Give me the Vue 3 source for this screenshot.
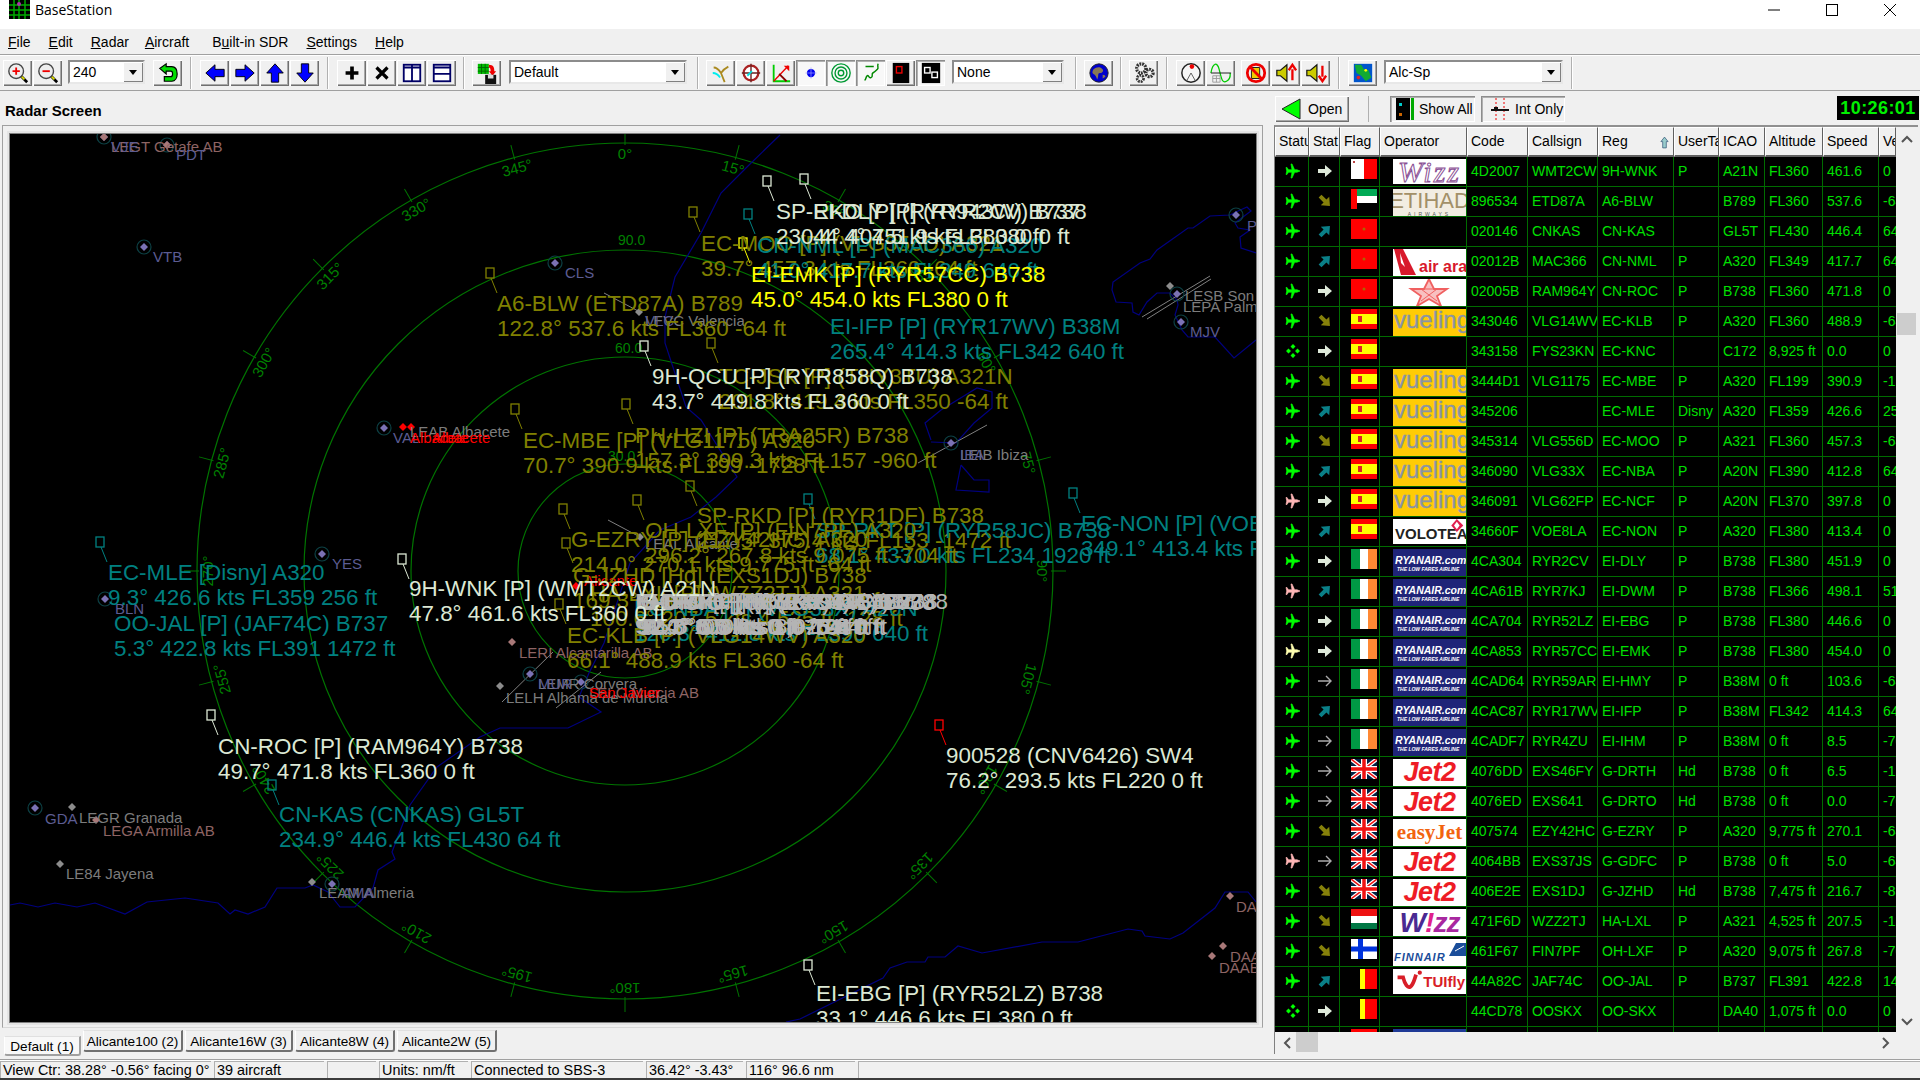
<template>
  <div class="window">
    <div class="titlebar">
      <svg class="app-icon" viewBox="0 0 21 19">
        <rect width="21" height="19" fill="#000" />
        <path d="M0 5h21M0 10h21M0 15h21M5 0v19M10 0v19M16 0v19" stroke="#0a0" stroke-width="1.5" />
        <circle cx="10" cy="4" r="2" fill="#a3a" />
      </svg>
      <span class="title">BaseStation</span>
      <div class="win-btns">
        <svg viewBox="0 0 12 12"><path d="M0 6h12" stroke="#000" /></svg>
        <svg viewBox="0 0 12 12"><rect x=".5" y=".5" width="11" height="11" fill="none" stroke="#000" /></svg>
        <svg viewBox="0 0 12 12"><path d="M0 0l12 12M12 0L0 12" stroke="#000" /></svg>
      </div>
    </div>

    <div class="menubar">
      <span><u>F</u>ile</span>
      <span><u>E</u>dit</span>
      <span><u>R</u>adar</span>
      <span class="m-a"><u>A</u>ircraft</span>
      <span class="m-b">B<u>u</u>ilt-in SDR</span>
      <span><u>S</u>ettings</span>
      <span><u>H</u>elp</span>
    </div>

    <div class="toolbar">
      <button class="tb">
        <svg viewBox="0 0 24 24"><path d="M15 15l7 7" stroke="#000" stroke-width="3" /><path d="M16 16l3 3" stroke="#dd0" stroke-width="2" /><circle cx="10" cy="10" r="8" fill="#eee" stroke="#444" stroke-width="1.5" /><path d="M6 10h8M10 6v8" stroke="#e00" stroke-width="2" /></svg>
      </button>
      <button class="tb">
        <svg viewBox="0 0 24 24"><path d="M15 15l7 7" stroke="#000" stroke-width="3" /><path d="M16 16l3 3" stroke="#dd0" stroke-width="2" /><circle cx="10" cy="10" r="8" fill="#eee" stroke="#444" stroke-width="1.5" /><path d="M6 10h8" stroke="#e00" stroke-width="2" /></svg>
      </button>
      <div class="combo" style="width: 77px; margin-left: 5px;"><span>240</span><i class="drop"></i></div>
      <button class="tb" style="margin-left: 7px;">
        <svg viewBox="0 0 24 24"><path d="M3 7l7-5v3h6c5 0 6 4 6 8s-2 8-6 8H8v-5h7c2 0 2-1 2-3s0-3-2-3h-5v3z" fill="#0d0" stroke="#000" stroke-width="1.3" /></svg>
      </button>
      <div class="sep"></div>
      <button class="tb"><svg viewBox="0 0 24 24"><path d="M2 12l10-9v5h10v8H12v5z" fill="#00f" stroke="#000" /></svg></button>
      <button class="tb"><svg viewBox="0 0 24 24"><path d="M22 12l-10-9v5H2v8h10v5z" fill="#00f" stroke="#000" /></svg></button>
      <button class="tb"><svg viewBox="0 0 24 24"><path d="M12 2l9 10h-5v10H8V12H3z" fill="#00f" stroke="#000" /></svg></button>
      <button class="tb"><svg viewBox="0 0 24 24"><path d="M12 22l9-10h-5V2H8v10H3z" fill="#00f" stroke="#000" /></svg></button>
      <div class="sep"></div>
      <button class="tb"><svg viewBox="0 0 24 24"><path d="M12 5v14M5 12h14" stroke="#000" stroke-width="4" /></svg></button>
      <button class="tb"><svg viewBox="0 0 24 24"><path d="M6 6l12 12M18 6L6 18" stroke="#000" stroke-width="3.5" /></svg></button>
      <button class="tb"><svg viewBox="0 0 24 24"><rect x="3" y="3" width="18" height="18" fill="#fff" stroke="#006" stroke-width="2" /><path d="M3 6h18M12 3v18" stroke="#006" stroke-width="2" /></svg></button>
      <button class="tb"><svg viewBox="0 0 24 24"><rect x="3" y="3" width="18" height="18" fill="#fff" stroke="#006" stroke-width="2" /><path d="M3 6h18M3 13h18" stroke="#006" stroke-width="2" /></svg></button>
      <div class="sep narrow"></div>
      <button class="tb">
        <svg viewBox="0 0 24 24"><rect x="2" y="2" width="12" height="11" fill="#0b0" /><path d="M2 6h12M2 10h12M6 2v11M10 2v11" stroke="#060" /><path d="M14 3c5 0 6 3 6 7h2l-4 5-4-5h2c0-3-1-4-2-4z" fill="#e00" /><rect x="10" y="14" width="12" height="10" fill="#111" /><rect x="13" y="14" width="6" height="4" fill="#ddd" /></svg>
      </button>
      <div class="combo" style="width: 178px; margin-left: 7px; margin-right: 3px;"><span>Default</span><i class="drop"></i></div>
      <div class="sep narrow"></div>
      <button class="tb"><svg viewBox="0 0 24 24"><path d="M4 6c4 0 6 3 8 6 2-3 4-5 8-7M12 12l4 10" fill="none" stroke="#aa8a20" stroke-width="2" /><path d="M3 12c3 0 6 2 8 5" fill="none" stroke="#0ee" stroke-width="2" /></svg></button>
      <button class="tb"><svg viewBox="0 0 24 24"><circle cx="12" cy="12" r="8" fill="#fff" stroke="#a22" stroke-width="2.5" /><path d="M12 2v20M2 12h20" stroke="#6a2020" stroke-width="1.5" /><path d="M8 15l5-5" stroke="#0dd" stroke-width="2" /></svg></button>
      <button class="tb"><svg viewBox="0 0 24 24"><path d="M4 3v18h18" fill="none" stroke="#0c0" stroke-width="2" /><path d="M4 21L20 4" stroke="#e00" stroke-width="1.5" /><path d="M15 4h6v6z" fill="#e00" /><path d="M10 13l8 8" stroke="#800" stroke-width="2" /></svg></button>
      <button class="tb down"><svg viewBox="0 0 24 24"><circle cx="12" cy="12" r="4.5" fill="#00e" /><path d="M12 6v12M6 12h12" stroke="#99f" stroke-width=".8" /></svg></button>
      <button class="tb down"><svg viewBox="0 0 24 24"><circle cx="12" cy="12" r="10" fill="none" stroke="#093" stroke-width="1.5" /><circle cx="12" cy="12" r="6.5" fill="none" stroke="#093" stroke-width="1.5" /><circle cx="12" cy="12" r="3" fill="none" stroke="#093" stroke-width="1.5" /></svg></button>
      <button class="tb down"><svg viewBox="0 0 24 24"><path d="M6 5h9M20 2c-2 2 1 4-1 6s-3 3-5 4 1 4-2 5-2-3-4-2-1 4-3 5" fill="none" stroke="#080" stroke-width="1.6" /></svg></button>
      <button class="tb"><svg viewBox="0 0 24 24"><rect x="3" y="1" width="18" height="22" fill="#000" /><rect x="7" y="5" width="6" height="7" fill="none" stroke="#e00" stroke-width="1.5" /></svg></button>
      <button class="tb down"><svg viewBox="0 0 24 24"><rect x="2" y="1" width="20" height="22" fill="#000" /><rect x="5" y="6" width="6" height="6" fill="none" stroke="#fff" stroke-width="1.5" /><rect x="13" y="11" width="6" height="6" fill="none" stroke="#fff" stroke-width="1.5" /></svg></button>
      <div class="combo" style="width: 112px; margin-left: 6px; margin-right: 4px;"><span>None</span><i class="drop"></i></div>
      <div class="sep narrow"></div>
      <button class="tb"><svg viewBox="0 0 24 24"><circle cx="12" cy="12" r="10" fill="#00c" stroke="#222" /><path d="M6 8c3-3 7-3 9-1 3 2 1 5-2 5s-1 4-3 7c-1-3-2-5-4-6s-1-3 0-5zM16 14c2 0 3 1 3 2l-3 2z" fill="#875" /></svg></button>
      <div class="sep narrow"></div>
      <button class="tb"><svg viewBox="0 0 24 24"><circle cx="9" cy="7" r="5" fill="none" stroke="#333" stroke-width="3.5" stroke-dasharray="2 1" /><circle cx="18" cy="12" r="4" fill="none" stroke="#333" stroke-width="3.5" stroke-dasharray="2 1" /><circle cx="8" cy="18" r="3.5" fill="none" stroke="#333" stroke-width="3" stroke-dasharray="2 1" /></svg></button>
      <div class="sep"></div>
      <button class="tb"><svg viewBox="0 0 24 24"><circle cx="12" cy="12" r="10" fill="#f6f6f6" stroke="#222" stroke-width="1.6" /><path d="M12 12L7 21M12 12l5 9" stroke="#555" /><circle cx="13" cy="5" r="2.5" fill="#e00" /></svg></button>
      <button class="tb"><svg viewBox="0 0 24 24"><path d="M1 12C3 0 8 0 10 8s3 16 8 13 4-6 4-9" fill="none" stroke="#0c0" stroke-width="1.4" /><path d="M1 12h22" stroke="#111" /><path d="M3 15h8v7H3zM3 18h8M7 15v7" fill="none" stroke="#999" /></svg></button>
      <button class="tb" style="margin-left: 5px;"><svg viewBox="0 0 24 24"><path d="M7 6l9 0v12H7z" fill="#ec0" stroke="#111" /><circle cx="12" cy="12" r="9.5" fill="none" stroke="#e00" stroke-width="3" /><path d="M5 5l14 14" stroke="#e00" stroke-width="3" /></svg></button>
      <button class="tb"><svg viewBox="0 0 24 24"><path d="M2 9h4l7-6v18l-7-6H2z" fill="#cc0" stroke="#111" stroke-width="1.3" /><path d="M19 20V8M15 9l4-6 4 6" fill="none" stroke="#e00" stroke-width="2.5" /></svg></button>
      <button class="tb"><svg viewBox="0 0 24 24"><path d="M2 9h4l7-6v18l-7-6H2z" fill="#cc0" stroke="#111" stroke-width="1.3" /><path d="M19 4v12M15 15l4 6 4-6" fill="none" stroke="#e00" stroke-width="2.5" /></svg></button>
      <div class="sep"></div>
      <button class="tb"><svg viewBox="0 0 24 24"><rect x="2" y="2" width="20" height="20" fill="#05c" /><path d="M3 3h7l3 5 5 1 3 8-6 4-5-6-5-3z" fill="#1a3" /><circle cx="7" cy="17" r="2" fill="#d22" /><circle cx="15" cy="9" r="1.5" fill="#ff0" /></svg></button>
      <div class="combo" style="width: 179px; margin-left: 6px;"><span>Alc-Sp</span><i class="drop"></i></div>
      <div class="sep"></div>
    </div>

    <div class="main">
      <section class="left">
        <div class="left-head">Radar Screen</div>
        <div class="radar-frame">
          <svg class="radar" viewBox="10 134 1246 888">
            <!-- range rings -->
            <circle v-for="r in rings" :key="r" :cx="cx" :cy="cy" :r="r" class="ring" />
            <text v-for="l in ringLabels" :key="l.t" :x="l.x" :y="l.y" class="range">{{ l.t }}</text>
            <g v-for="a in ticks" :key="a" :transform="`rotate(${a} ${cx} ${cy})`">
              <line :x1="cx" :x2="cx" :y1="cy - 426" :y2="cy - 441" class="tick" />
              <text :x="cx" :y="cy - 412" class="bearing">{{ a }}°</text>
            </g>

            <!-- coast lines -->
            <polyline v-for="(c, i) in coast" :key="i" :points="c" class="coast" />
            <line v-for="(s, i) in grounds" :key="'g' + i" :x1="s[0]" :y1="s[1]" :x2="s[2]" :y2="s[3]" class="runway" />

            <!-- navaids and airfields -->
            <g v-for="n in navaids" :key="n[0] + n[1]">
              <circle :cx="n[0]" :cy="n[1]" r="7" class="nav-ring" />
              <path :d="diamond(n[0], n[1], 4)" fill="#7b72b4" />
            </g>
            <path v-for="d in fields" :key="d[0] + '-' + d[1]" :d="diamond(d[0], d[1], 4)" :fill="d[2]" />
            <text v-for="t in places" :key="t[2] + t[0]" :x="t[0]" :y="t[1]" :fill="t[3]" class="place">{{ t[2] }}</text>

            <!-- aircraft -->
            <g v-for="(m, i) in markers" :key="'m' + i">
              <rect :x="m[0] - 4" :y="m[1] - 5" width="8" height="10" fill="none" :stroke="m[2]" stroke-width="1.3" />
              <line :x1="m[0] + 1" :y1="m[1] + 5" :x2="m[0] + 7" :y2="m[1] + 20" :stroke="m[2]" />
            </g>
            <g v-for="l in labels" :key="l.a" :fill="l.c" class="ac">
              <text :x="l.x" :y="l.y + 8">{{ l.a }}</text>
              <text :x="l.x" :y="l.y + 32.5">{{ l.b }}</text>
            </g>
          </svg>
        </div>
        <div class="tabs">
          <span class="tab active">Default (1)</span>
          <span class="tab" style="width: 100px;">Alicante100 (2)</span>
          <span class="tab" style="width: 108px;">Alicante16W (3)</span>
          <span class="tab" style="width: 100px;">Alicante8W (4)</span>
          <span class="tab" style="width: 100px;">Alicante2W (5)</span>
        </div>
      </section>

      <section class="right">
        <div class="right-head">
          <button class="txt-btn open">
            <svg viewBox="0 0 20 22" width="20" height="22"><path d="M19 1v20L1 11z" fill="#0f0" stroke="#222" /></svg>
            Open
          </button>
          <div class="vline"></div>
          <button class="txt-btn show">
            <svg viewBox="0 0 18 22" width="18" height="22"><rect width="14" height="22" fill="#000" /><rect x="15" width="3" height="22" fill="#0a0" /><rect x="3" y="5" width="3" height="3" fill="#0cc" /><rect x="3" y="15" width="3" height="3" fill="#c60" /></svg>
            Show All
          </button>
          <button class="txt-btn int">
            <svg viewBox="0 0 20 22" width="20" height="22"><path d="M6 0v22M14 0v22" stroke="#e00" stroke-dasharray="2 2" /><path d="M1 12h18" stroke="#111" stroke-width="2" /><rect x="4" y="9" width="4" height="3" fill="#111" /></svg>
            Int Only
          </button>
          <div class="clock">10:26:01</div>
        </div>

        <div class="list-frame">
          <div class="list-body">
            <div class="list">
              <div class="hdr">
                <span v-for="h in headers" :key="h" :class="{ 'h-reg': h === 'Reg' }">{{ h }}
                  <svg v-if="h === 'Reg'" class="sort" viewBox="0 0 10 14"><path d="M5 1l4 5H7v7H3V6H1z" fill="#9cc" stroke="#357" stroke-width=".8" /></svg>
                </span>
              </div>
              <div v-for="(r, i) in rows" :key="i" class="row">
                <div class="cell ic ic1">
                  <svg viewBox="0 0 16 16" width="16" height="16">
                    <path v-if="r.plane !== 'd'" d="M15 8l-3-1.2H9.6L7 1H6l1 5.8H3.5L2 4.5H1L1.8 8 1 11.500h1l1.500-2.300H7L6 15h1l2.600-5.800H12z" :fill="planeColor[r.plane]" :stroke="planeColor[r.plane]" stroke-width=".7" />
                    <path v-else d="M8 1l2.500 2.500L8 6 5.500 3.500zM3.500 5.500L6 8l-2.500 2.500L1 8zM12.500 5.500L15 8l-2.500 2.500L10 8zM8 10l2.500 2.500L8 15l-2.500-2.500z" fill="#0f0" />
                  </svg>
                </div>
                <div class="cell ic ic2">
                  <svg viewBox="0 0 16 16" width="16" height="16" :class="'arrow-' + r.arrow">
                    <path v-if="r.arrow === 't'" d="M1 8h13M9 3l5 5-5 5" fill="none" stroke="#aaa" stroke-width="1.400" />
                    <path v-else d="M1 6h7V2l7 6-7 6v-4H1z" />
                  </svg>
                </div>
                <div class="cell flagc">
                  <svg v-if="r.flag" class="flag" viewBox="0 0 26 20">
                    <template v-if="r.flag === 'mt'"><rect width="13" height="20" fill="#fff" /><rect x="13" width="13" height="20" fill="#f00" /><rect x="2" y="2" width="2" height="2" fill="#b44" /></template>
                    <template v-else-if="r.flag === 'ae'"><rect width="6" height="20" fill="#f00" /><rect x="6" width="20" height="7" fill="#0a5" /><rect x="6" y="7" width="20" height="7" fill="#fff" /></template>
                    <template v-else-if="r.flag === 'ma'"><rect width="26" height="20" fill="#f00" /><circle cx="13" cy="10" r="1.500" fill="#a60" /></template>
                    <template v-else-if="r.flag === 'es'"><rect width="26" height="20" fill="#f00" /><rect y="5" width="26" height="10" fill="#ff0" /><rect x="7" y="7" width="4" height="6" fill="#d22" /></template>
                    <template v-else-if="r.flag === 'ie'"><rect width="9" height="20" fill="#094" /><rect x="9" width="8" height="20" fill="#fff" /><rect x="17" width="9" height="20" fill="#f83" /></template>
                    <template v-else-if="r.flag === 'gb'"><rect width="26" height="20" fill="#024" /><path d="M0 0l26 20M26 0L0 20" stroke="#fff" stroke-width="4" /><path d="M0 0l26 20M26 0L0 20" stroke="#e11" stroke-width="1.500" /><path d="M13 0v20M0 10h26" stroke="#fff" stroke-width="6" /><path d="M13 0v20M0 10h26" stroke="#e11" stroke-width="3.500" /></template>
                    <template v-else-if="r.flag === 'hu'"><rect width="26" height="7" fill="#e11" /><rect y="7" width="26" height="7" fill="#fff" /><rect y="14" width="26" height="6" fill="#074" /></template>
                    <template v-else-if="r.flag === 'fi'"><rect width="26" height="20" fill="#fff" /><rect x="7" width="5" height="20" fill="#03d" /><rect y="7.500" width="26" height="5" fill="#03d" /></template>
                    <template v-else-if="r.flag === 'be'"><rect x="7" width="7" height="20" fill="#ff0" /><rect x="14" width="12" height="20" fill="#f00" /><rect x="7" width="2" height="20" fill="#000" /></template>
                  </svg>
                </div>
                <div class="cell logoc">
                  <div v-if="r.logo" class="logo" :class="'l-' + r.logo">
                    <svg v-if="r.logo === 'ram'" viewBox="0 0 73 27" class="fill"><path d="M36 0l5 10h13l-10 7 4 10-12-7-12 7 4-10-10-7h13z" fill="#f8c0c0" stroke="#f06060" stroke-width="1.800" /><path d="M22 10h28M28 22l16-12M44 22L28 10" stroke="#f06060" /></svg>
                    <svg v-if="r.logo === 'arabia'" viewBox="0 0 73 27" class="fill"><path d="M1 0h9l13 26H8z" fill="#d8192b" /><path d="M7 4l5 14-4-4z" fill="#fff" /></svg>
                    <svg v-if="r.logo === 'volotea'" viewBox="0 0 73 27" class="fill"><path d="M66 0l7 7-7 7-6-7z" fill="#e0204f" /><path d="M66 3l3 4-3 4-3-4z" fill="#fff" /></svg>
                    <svg v-if="r.logo === 'finnair'" viewBox="0 0 73 27" class="fill"><path d="M63 4h10v13H56z" fill="#1a4d9a" /><path d="M62 12l9-5" stroke="#fff" /></svg>
                    <svg v-if="r.logo === 'tui'" viewBox="0 0 73 27" class="fill"><path d="M2 9h6c2 8 5 12 8 10 3-2 4-7 6-13" fill="none" stroke="#d81e28" stroke-width="4" /><circle cx="26" cy="4" r="2.300" fill="#d81e28" /></svg>
                    <template v-if="r.logo === 'wizz'"><span>W</span><span class="wz-bang">!</span><span class="wz-z">zz</span></template>
                    <span v-else>{{ logoText[r.logo] }}</span>
                    <small v-if="r.logo === 'ryan'">THE LOW FARES AIRLINE</small>
                    <small v-if="r.logo === 'etihad'">AIRWAYS</small>
                  </div>
                </div>
                <div class="cell">{{ r.code }}</div>
                <div class="cell">{{ r.call }}</div>
                <div class="cell">{{ r.reg }}</div>
                <div class="cell">{{ r.user }}</div>
                <div class="cell">{{ r.icao }}</div>
                <div class="cell">{{ r.alt }}</div>
                <div class="cell">{{ r.spd }}</div>
                <div class="cell last">{{ r.vs }}</div>
              </div>
            </div>
            <div class="vscroll">
              <svg viewBox="0 0 12 8" width="12" height="8"><path d="M1 7l5-5 5 5" fill="none" stroke="#555" stroke-width="2" /></svg>
              <div class="vthumb"></div>
              <svg class="vdown" viewBox="0 0 12 8" width="12" height="8"><path d="M1 1l5 5 5-5" fill="none" stroke="#555" stroke-width="2" /></svg>
            </div>
          </div>
          <div class="hscroll">
            <svg viewBox="0 0 8 12" width="8" height="12"><path d="M7 1L2 6l5 5" fill="none" stroke="#555" stroke-width="2" /></svg>
            <div class="hthumb"></div>
            <svg class="hright" viewBox="0 0 8 12" width="8" height="12"><path d="M1 1l5 5-5 5" fill="none" stroke="#555" stroke-width="2" /></svg>
          </div>
        </div>
      </section>
    </div>

    <div class="statusbar">
      <span style="width: 211px;">View Ctr: 38.28° -0.56° facing 0°</span>
      <span style="width: 110px;">39 aircraft</span>
      <span style="width: 49px;"></span>
      <span style="width: 89px;">Units: nm/ft</span>
      <span style="width: 172px;">Connected to SBS-3</span>
      <span style="width: 97px;">36.42° -3.43°</span>
      <span style="width: 109px;">116° 96.6 nm</span>
      <span class="grow"></span>
    </div>
    <div class="taskline"></div>
  </div>
</template>

<script setup>
const cx = 625
const cy = 571
const rings = [107, 214, 321, 428]
const ticks = Array.from({ length: 24 }, (_, i) => i * 15)
const ringLabels = [
  { t: '90.0', x: 618, y: 245 },
  { t: '60.0', x: 615, y: 353 },
  { t: '30.0', x: 608, y: 461 },
]

const diamond = (x, y, r) => `M${x} ${y - r}L${x + r} ${y}L${x} ${y + r}L${x - r} ${y}Z`

const coast = [
  '10,905 20,903 38,907 55,903 77,907 95,903 125,914 147,902 185,898 218,903 230,914 235,910 248,914 265,907 277,888 305,888 313,885 328,892 340,907 355,907 373,888 378,870 395,859 392,852 410,805 437,767 480,737 500,728 530,728 568,728 601,712 579,697 589,673 604,643 630,563 660,530 691,517 716,497 737,477 701,420 686,407 665,343 665,317 675,277 701,233 721,193 747,167 780,135',
  '786,1022 800,1019 883,978 890,968 907,962 925,962 928,957 945,957 958,946 982,953 1042,942 1078,942 1128,929 1142,931 1145,936 1170,939 1183,933 1215,908 1225,892 1248,892 1256,902',
  '931,440 925,423 941,410 977,388 992,392 992,408 974,423 956,443 931,442',
  '961,465 956,490 989,492 989,480 974,480 961,465',
  '1256,253 1241,248 1240,237 1250,230 1238,228 1235,223 1243,217 1251,211 1247,207 1236,212 1230,215 1210,216 1193,228 1188,228 1157,250 1150,259 1140,263 1113,282 1112,290 1116,302 1132,303 1133,312 1139,315 1147,302 1157,293 1170,293 1177,300 1178,305 1175,315 1182,330 1188,337 1215,337 1234,358 1256,340',
]

const grounds = [
  [604, 293, 640, 312],
  [918, 463, 987, 425],
  [1142, 317, 1210, 276],
  [1147, 319, 1211, 279],
  [502, 702, 553, 652],
  [556, 708, 601, 672],
  [608, 520, 640, 537],
]

const navaids = [
  [167, 145], [144, 247], [384, 428], [322, 554], [105, 599], [35, 808], [332, 884],
  [555, 263], [951, 443], [1177, 294], [1181, 322], [1236, 215], [104, 137], [530, 674], [581, 682],
]

const grey = '#8c8c8c'
const brown = '#a87878'
const fields = [
  [104, 137, brown], [167, 145, brown], [72, 807, grey], [96, 820, brown], [60, 864, grey], [312, 882, grey],
  [639, 312, grey], [1170, 286, grey], [512, 642, brown], [500, 686, grey], [640, 537, grey],
  [1230, 896, brown], [1223, 946, brown], [1212, 956, brown], [403, 427, '#f00'], [411, 427, '#f00'], [576, 586, '#f00'],
]

const navText = '#5c5c92'
const placeText = '#7c7c7c'
const brownText = '#8e6464'
const places = [
  [111, 152, 'LEGT Getafe AB', brownText],
  [111, 152, 'VJE', navText],
  [176, 160, 'PDT', navText],
  [153, 262, 'VTB', navText],
  [393, 443, 'VAL', navText],
  [410, 437, 'LEAB Albacete', placeText],
  [410, 443, 'Albacete', '#f00'],
  [432, 443, 'Albacete', '#f00'],
  [332, 569, 'YES', navText],
  [115, 614, 'BLN', navText],
  [45, 824, 'GDA', navText],
  [79, 823, 'LEGR Granada', placeText],
  [103, 836, 'LEGA Armilla AB', brownText],
  [66, 879, 'LE84 Jayena', placeText],
  [319, 898, 'LEAM Almeria', placeText],
  [342, 898, 'AMA', navText],
  [565, 278, 'CLS', navText],
  [645, 326, 'LEVC Valencia', placeText],
  [645, 326, 'VLC', navText],
  [960, 460, 'LEIB Ibiza', placeText],
  [960, 460, 'IBA', navText],
  [1185, 301, 'LESB Son Bonet', placeText],
  [1183, 312, 'LEPA Palma', placeText],
  [1190, 337, 'MJV', navText],
  [1247, 231, 'PTI', navText],
  [519, 658, 'LERI Alcantarilla AB', brownText],
  [538, 689, 'LEMR Corvera', placeText],
  [538, 689, 'MUR', navText],
  [506, 703, 'LELH Alhama de Murcia', placeText],
  [589, 698, 'LELC Murcia AB', brownText],
  [589, 698, 'San Javier', '#f00'],
  [645, 549, 'LEAL Alicante', placeText],
  [584, 586, 'Alicante', '#f00'],
  [1236, 912, 'DAOO', brownText],
  [1230, 962, 'DAAG', brownText],
  [1219, 973, 'DAAB', brownText],
]

const olive = '#808000'
const teal = '#008080'
const level = '#dce8d4'
const yellow = '#ffff00'
const ground = '#b4b4b4'

const markers = [
  [767, 181, level], [804, 179, level], [748, 214, teal], [693, 212, olive], [743, 243, yellow],
  [490, 273, olive], [644, 346, level], [711, 343, olive], [515, 409, olive], [626, 404, olive],
  [690, 486, olive], [808, 499, teal], [1073, 493, teal], [637, 500, olive], [563, 509, olive],
  [566, 543, olive], [559, 604, olive], [402, 559, level], [939, 725, '#f00'], [100, 542, teal],
  [211, 715, level], [272, 785, teal], [808, 965, level],
]

const labels = [
  { x: 701, y: 243, c: olive, a: 'EC-MOO [P] (VLG556D) A321', b: '39.7° 457.3 kts FL360 -64 ft' },
  { x: 757, y: 245, c: teal, a: 'CN-NML [P] (MAC366) A320', b: '41.0° 417.7 kts FL349 640 ft' },
  { x: 497, y: 303, c: olive, a: 'A6-BLW (ETD87A) B789', b: '122.8° 537.6 kts FL360 -64 ft' },
  { x: 830, y: 326, c: teal, a: 'EI-IFP [P] (RYR17WV) B38M', b: '265.4° 414.3 kts FL342 640 ft' },
  { x: 719, y: 376, c: olive, a: 'TC-JSK [P] (THY3TU) A321N', b: '201.8° 419.4 kts FL350 -64 ft' },
  { x: 523, y: 440, c: olive, a: 'EC-MBE [P] (VLG1175) A320', b: '70.7° 390.9 kts FL199 -1728 ft' },
  { x: 635, y: 435, c: olive, a: 'PH-HZI [P] (TRA25R) B738', b: '157.3° 399.3 kts FL157 -960 ft' },
  { x: 697, y: 515, c: olive, a: 'SP-RKD [P] (RYR1DF) B738', b: '217.5° 375.4 kts FL153 -1472 ft' },
  { x: 816, y: 530, c: teal, a: 'SP-RKT [P] (RYR58JC) B738', b: '68.1° 433.0 kts FL234 1920 ft' },
  { x: 1081, y: 523, c: teal, a: 'EC-NON [P] (VOE8LA) A320', b: '349.1° 413.4 kts FL380 0 ft' },
  { x: 645, y: 530, c: olive, a: 'OH-LXF [P] (FIN7PF) A320', b: '296.2° 267.8 kts 9,075 ft -704 ft' },
  { x: 571, y: 539, c: olive, a: 'G-EZRY [P] (EZY42HC) A320', b: '214.0° 270.1 kts 9,775 ft -64 ft' },
  { x: 573, y: 575, c: olive, a: 'G-JZHD [Hd] (EXS1DJ) B738', b: '169.3° 216.7 kts 7,475 ft -832 ft' },
  { x: 590, y: 593, c: olive, a: 'HA-LXL [P] (WZZ2TJ) A321', b: '100.6° 207.5 kts 4,525 ft -128 ft' },
  { x: 634, y: 608, c: teal, a: 'EC-NBA [P] (VLG33X) A20N', b: '120.3° 412.8 kts FL390 640 ft' },
  { x: 567, y: 635, c: olive, a: 'EC-KLB [P] (VLG14WV) A320', b: '66.1° 488.9 kts FL360 -64 ft' },
  { x: 108, y: 572, c: teal, a: 'EC-MLE [Disny] A320', b: '9.3° 426.6 kts FL359 256 ft' },
  { x: 114, y: 623, c: teal, a: 'OO-JAL [P] (JAF74C) B737', b: '5.3° 422.8 kts FL391 1472 ft' },
  { x: 279, y: 814, c: teal, a: 'CN-KAS (CNKAS) GL5T', b: '234.9° 446.4 kts FL430 64 ft' },
  { x: 635, y: 601, c: ground, a: 'EI-HMY [P] (RYR59AR) B38M', b: '90.4° 103.6 kts 0 ft -64 ft' },
  { x: 637, y: 601, c: ground, a: 'EI-IHM [P] (RYR4ZU) B38M', b: '92.1° 8.5 kts 0 ft -704 ft' },
  { x: 636, y: 601, c: ground, a: 'G-DRTH [Hd] (EXS46FY) B738', b: '91.0° 6.5 kts 0 ft -128 ft' },
  { x: 638, y: 602, c: ground, a: 'G-DRTO [Hd] (EXS641) B738', b: '92.7° 0.0 kts 0 ft -704 ft' },
  { x: 640, y: 601, c: ground, a: 'G-GDFC [P] (EXS37JS) B738', b: '93.3° 5.0 kts 0 ft -64 ft' },
  { x: 642, y: 602, c: ground, a: 'OO-SKX (OOSKX) DA40', b: '94.0° 0.0 kts 1,075 ft 0 ft' },
  { x: 644, y: 601, c: ground, a: 'EC-KNC (FYS23KN) C172', b: '95.5° 0.0 kts 8,925 ft 0 ft' },
  { x: 776, y: 211, c: level, a: 'SP-RKO [P] (RYR943W) B737', b: '230.4° 407.5 kts FL380 0 ft' },
  { x: 813, y: 211, c: level, a: 'EI-DLY [P] (RYR2CV) B738', b: '44.4° 451.9 kts FL380 0 ft' },
  { x: 751, y: 274, c: yellow, a: 'EI-EMK [P] (RYR57CC) B738', b: '45.0° 454.0 kts FL380 0 ft' },
  { x: 652, y: 376, c: level, a: '9H-QCU [P] (RYR858Q) B738', b: '43.7° 449.8 kts FL360 0 ft' },
  { x: 409, y: 588, c: level, a: '9H-WNK [P] (WMT2CW) A21N', b: '47.8° 461.6 kts FL360 0 ft' },
  { x: 218, y: 746, c: level, a: 'CN-ROC [P] (RAM964Y) B738', b: '49.7° 471.8 kts FL360 0 ft' },
  { x: 946, y: 755, c: level, a: '900528 (CNV6426) SW4', b: '76.2° 293.5 kts FL220 0 ft' },
  { x: 816, y: 993, c: level, a: 'EI-EBG [P] (RYR52LZ) B738', b: '33.1° 446.6 kts FL380 0 ft' },
]

const headers = ['Statu', 'Stat', 'Flag', 'Operator', 'Code', 'Callsign', 'Reg', 'UserTa', 'ICAO', 'Altitude', 'Speed', 'Ve']

const planeColor = { g: '#00ff00', p: '#ffb6b6', y: '#ffffb0' }

const logoText = {
  wizzold: 'Wizz',
  etihad: 'ETIHAD',
  arabia: 'air arabia',
  ram: '',
  vueling: 'vueling',
  volotea: 'VOLOTEA',
  ryan: 'RYANAIR.com',
  jet2: 'Jet2',
  easy: 'easyJet',
  finnair: 'FINNAIR',
  tui: 'TUIfly',
  blue: '',
}

// plane, arrow, flag, logo, code, callsign, reg, user tag, icao, altitude, speed, vert rate
const data = [
  ['g', 'w', 'mt', 'wizzold', '4D2007', 'WMT2CW', '9H-WNK', 'P', 'A21N', 'FL360', '461.6', '0'],
  ['g', 'o', 'ae', 'etihad', '896534', 'ETD87A', 'A6-BLW', '', 'B789', 'FL360', '537.6', '-64'],
  ['g', 'c', 'ma', '', '020146', 'CNKAS', 'CN-KAS', '', 'GL5T', 'FL430', '446.4', '64'],
  ['g', 'c', 'ma', 'arabia', '02012B', 'MAC366', 'CN-NML', 'P', 'A320', 'FL349', '417.7', '640'],
  ['g', 'w', 'ma', 'ram', '02005B', 'RAM964Y', 'CN-ROC', 'P', 'B738', 'FL360', '471.8', '0'],
  ['g', 'o', 'es', 'vueling', '343046', 'VLG14WV', 'EC-KLB', 'P', 'A320', 'FL360', '488.9', '-64'],
  ['d', 'w', 'es', '', '343158', 'FYS23KN', 'EC-KNC', '', 'C172', '8,925 ft', '0.0', '0'],
  ['g', 'o', 'es', 'vueling', '3444D1', 'VLG1175', 'EC-MBE', 'P', 'A320', 'FL199', '390.9', '-1728'],
  ['g', 'c', 'es', 'vueling', '345206', '', 'EC-MLE', 'Disny', 'A320', 'FL359', '426.6', '256'],
  ['g', 'o', 'es', 'vueling', '345314', 'VLG556D', 'EC-MOO', 'P', 'A321', 'FL360', '457.3', '-64'],
  ['g', 'c', 'es', 'vueling', '346090', 'VLG33X', 'EC-NBA', 'P', 'A20N', 'FL390', '412.8', '640'],
  ['p', 'w', 'es', 'vueling', '346091', 'VLG62FP', 'EC-NCF', 'P', 'A20N', 'FL370', '397.8', '0'],
  ['g', 'c', 'es', 'volotea', '34660F', 'VOE8LA', 'EC-NON', 'P', 'A320', 'FL380', '413.4', '0'],
  ['g', 'w', 'ie', 'ryan', '4CA304', 'RYR2CV', 'EI-DLY', 'P', 'B738', 'FL380', '451.9', '0'],
  ['p', 'c', 'ie', 'ryan', '4CA61B', 'RYR7KJ', 'EI-DWM', 'P', 'B738', 'FL366', '498.1', '512'],
  ['g', 'w', 'ie', 'ryan', '4CA704', 'RYR52LZ', 'EI-EBG', 'P', 'B738', 'FL380', '446.6', '0'],
  ['y', 'w', 'ie', 'ryan', '4CA853', 'RYR57CC', 'EI-EMK', 'P', 'B738', 'FL380', '454.0', '0'],
  ['g', 't', 'ie', 'ryan', '4CAD64', 'RYR59AR', 'EI-HMY', 'P', 'B38M', '0 ft', '103.6', '-64'],
  ['g', 'c', 'ie', 'ryan', '4CAC87', 'RYR17WV', 'EI-IFP', 'P', 'B38M', 'FL342', '414.3', '640'],
  ['g', 't', 'ie', 'ryan', '4CADF7', 'RYR4ZU', 'EI-IHM', 'P', 'B38M', '0 ft', '8.5', '-704'],
  ['g', 't', 'gb', 'jet2', '4076DD', 'EXS46FY', 'G-DRTH', 'Hd', 'B738', '0 ft', '6.5', '-128'],
  ['g', 't', 'gb', 'jet2', '4076ED', 'EXS641', 'G-DRTO', 'Hd', 'B738', '0 ft', '0.0', '-704'],
  ['g', 'o', 'gb', 'easy', '407574', 'EZY42HC', 'G-EZRY', 'P', 'A320', '9,775 ft', '270.1', '-64'],
  ['p', 't', 'gb', 'jet2', '4064BB', 'EXS37JS', 'G-GDFC', 'P', 'B738', '0 ft', '5.0', '-64'],
  ['g', 'o', 'gb', 'jet2', '406E2E', 'EXS1DJ', 'G-JZHD', 'Hd', 'B738', '7,475 ft', '216.7', '-832'],
  ['g', 'o', 'hu', 'wizz', '471F6D', 'WZZ2TJ', 'HA-LXL', 'P', 'A321', '4,525 ft', '207.5', '-128'],
  ['g', 'o', 'fi', 'finnair', '461F67', 'FIN7PF', 'OH-LXF', 'P', 'A320', '9,075 ft', '267.8', '-704'],
  ['g', 'c', 'be', 'tui', '44A82C', 'JAF74C', 'OO-JAL', 'P', 'B737', 'FL391', '422.8', '1472'],
  ['d', 'w', 'be', '', '44CD78', 'OOSKX', 'OO-SKX', '', 'DA40', '1,075 ft', '0.0', '0'],
  ['g', 'w', 'ma', 'blue', '', '', '', '', '', '', '', ''],
]

const rows = data.map(([plane, arrow, flag, logo, code, call, reg, user, icao, alt, spd, vs]) => ({
  plane, arrow, flag, logo, code, call, reg, user, icao, alt, spd, vs,
}))
</script>

<style scoped>
.window {
  width: 1920px;
  height: 1080px;
  display: flex;
  flex-direction: column;
  background: #f0f0f0;
  font-family: "Liberation Sans", Arial, sans-serif;
  font-size: 14px;
  color: #000;
  overflow: hidden;
}

.titlebar {
  height: 29px;
  background: #fff;
  display: flex;
  align-items: flex-start;
}

.app-icon {
  width: 21px;
  height: 19px;
  margin-left: 9px;
}

.title {
  margin-left: 5px;
  font-family: "Open Sans", sans-serif;
  font-size: 14px;
  line-height: 20px;
}

.win-btns {
  margin-left: auto;
  display: flex;
  gap: 46px;
  padding: 4px 24px 0 0;
}

.win-btns svg {
  width: 12px;
  height: 12px;
}

.menubar {
  height: 25px;
  display: flex;
  align-items: center;
  gap: 18px;
  padding-left: 8px;
  border-bottom: 1px solid #a0a0a0;
  box-shadow: 0 1px 0 #fff;
}

.m-a {
  margin-left: -2px;
}

.m-b {
  margin-left: 5px;
}

.toolbar {
  height: 36px;
  display: flex;
  align-items: flex-start;
  gap: 1px;
  padding: 5px 0 0 3px;
  box-sizing: border-box;
  border-bottom: 1px solid #a0a0a0;
}

.tb {
  width: 29px;
  height: 26px;
  padding: 0;
  flex: none;
  display: flex;
  align-items: center;
  justify-content: center;
  background: #f0f0f0;
  border: none;
  box-shadow: inset 1px 1px #fff, inset -1px -1px #707070, inset -2px -2px #a8a8a8;
}

.tb.down {
  box-shadow: inset 1px 1px #8c8c8c, inset 2px 2px #b0b0b0, inset -1px -1px #fff;
  background: #f8f8f8;
}

.tb svg {
  width: 22px;
  height: 22px;
}

.sep {
  flex: none;
  width: 2px;
  height: 32px;
  margin: -3px 7px 0;
  background: linear-gradient(90deg, #b0b0b0 50%, #fff 50%);
}

.sep.narrow {
  margin-left: 6px;
  margin-right: 6px;
}

.combo {
  flex: none;
  height: 24px;
  box-sizing: border-box;
  display: flex;
  align-items: center;
  background: #fff;
  border: 2px solid;
  border-color: #8c8c8c #e8e8e8 #e8e8e8 #8c8c8c;
  padding-left: 3px;
}

.drop {
  margin-left: auto;
  width: 20px;
  height: 20px;
  background: #f0f0f0;
  box-shadow: inset 1px 1px #fff, inset -1px -1px #808080;
  position: relative;
}

.drop::after {
  content: "";
  position: absolute;
  left: 6px;
  top: 8px;
  border: 4px solid transparent;
  border-top: 5px solid #000;
  border-bottom: none;
}

.main {
  flex: 1;
  min-height: 0;
  display: flex;
}

.left {
  width: 1266px;
  flex: none;
  display: flex;
  flex-direction: column;
}

.left-head {
  height: 34px;
  line-height: 39px;
  padding-left: 5px;
  font-size: 15px;
  font-weight: bold;
}

.radar-frame {
  height: 903px;
  width: 1261px;
  margin-left: 2px;
  box-sizing: border-box;
  padding: 8px 6px 5px 7px;
  border-top: 1px solid #a0a0a0;
  border-left: 1px solid #a0a0a0;
  border-right: 1px solid #a0a0a0;
  border-bottom: 1px solid #d8d8d8;
}

.radar {
  display: block;
  width: 1246px;
  height: 888px;
  background: #000;
  box-shadow: 0 0 0 1px #808080, 0 0 0 3px #e4e4e4;
  overflow: hidden;
  font-family: "Liberation Sans", Arial, sans-serif;
}

.ring {
  fill: none;
  stroke: #007400;
  stroke-width: 1.2;
}

.tick {
  stroke: #007400;
}

.range {
  fill: #008000;
  font-size: 14px;
}

.bearing {
  fill: #008000;
  font-size: 15px;
  text-anchor: middle;
}

.coast {
  fill: none;
  stroke: #000080;
  stroke-width: 1.2;
}

.runway {
  stroke: #808080;
}

.nav-ring {
  fill: none;
  stroke: #0c4044;
  stroke-width: 1.2;
}

.place {
  font-size: 15px;
}

.ac {
  font-size: 22.4px;
}

.tabs {
  height: 30px;
  display: flex;
  align-items: flex-start;
  gap: 2px;
  padding: 2px 0 0 4px;
  font-size: 13.6px;
}

.tab {
  flex: none;
  height: 22px;
  line-height: 21px;
  text-align: center;
  box-sizing: border-box;
  background: #f0f0f0;
  border-left: 1px solid #fff;
  border-top: 1px solid #e0e0e0;
  border-right: 2px solid #707070;
  border-bottom: 2px solid #707070;
  border-radius: 0 0 3px 3px;
}

.tab.active {
  width: 77px;
  height: 20px;
  margin-top: 6px;
  background: #f8f8f8;
  line-height: 19px;
  border-bottom-color: #a0a0a0;
  border-right-color: #a0a0a0;
}

.right {
  flex: 1;
  min-width: 0;
  display: flex;
  flex-direction: column;
}

.right-head {
  height: 34px;
  display: flex;
  align-items: flex-start;
  padding: 5px 0 0 9px;
  box-sizing: border-box;
}

.txt-btn {
  height: 26px;
  display: flex;
  align-items: center;
  gap: 5px;
  padding: 0 0 0 6px;
  flex: none;
  white-space: nowrap;
  background: #f0f0f0;
  border: none;
  font: inherit;
  box-shadow: inset 1px 1px #fff, inset -1px -1px #707070, inset -2px -2px #a8a8a8;
  box-sizing: border-box;
}

.open {
  width: 74px;
  gap: 7px;
}

.show,
.int {
  box-shadow: inset 1px 1px #8c8c8c, inset 2px 2px #b0b0b0, inset -1px -1px #fff;
}

.show {
  width: 85px;
}

.int {
  width: 84px;
  margin-left: 6px;
  padding-left: 9px;
}

.vline {
  width: 1px;
  height: 26px;
  background: #b0b0b0;
  margin: 0 21px 0 19px;
}

.clock {
  margin-left: auto;
  margin-right: 1px;
  width: 82px;
  height: 24px;
  line-height: 24px;
  text-align: center;
  background: #000;
  color: #00f000;
  font-size: 18px;
  font-weight: bold;
  letter-spacing: .4px;
}

.list-frame {
  width: 644px;
  margin-left: 8px;
  box-sizing: border-box;
  border-top: 2px solid #909090;
  border-left: 1px solid #808080;
}

.list-body {
  display: flex;
  height: 905px;
}

.list {
  width: 621px;
  flex: none;
  overflow: hidden;
  background: #000;
}

.hdr,
.row {
  display: grid;
  grid-template-columns: 34px 31px 40px 87px 61px 70px 76px 45px 46px 58px 56px 17px;
}

.hdr {
  height: 30px;
  background: #f0f0f0;
}

.hdr span {
  overflow: hidden;
  white-space: nowrap;
  padding-left: 3px;
  line-height: 27px;
  box-sizing: border-box;
  border-left: 1px solid #fff;
  border-top: 1px solid #fff;
  border-right: 1px solid #606060;
  border-bottom: 2px solid #606060;
}

.h-reg {
  position: relative;
}

.sort {
  position: absolute;
  right: 4px;
  top: 8px;
  width: 9px;
  height: 13px;
}

.row {
  height: 30px;
  box-sizing: border-box;
  border-bottom: 1px solid #006c00;
  color: #00e000;
}

.cell {
  display: flex;
  align-items: center;
  padding: 0 0 2px 4px;
  overflow: hidden;
  white-space: nowrap;
  box-sizing: border-box;
  border-right: 1px solid #006c00;
}

.cell.last {
  border-right: none;
}

.cell.ic {
  justify-content: center;
}

.cell.ic1 {
  padding-left: 3px;
}

.cell.ic2 {
  padding-left: 1px;
}

.arrow-w {
  fill: #dfeadb;
}

.arrow-o {
  fill: #85800a;
  transform: rotate(45deg);
}

.arrow-c {
  fill: #0a8088;
  transform: rotate(-45deg);
}

.flagc {
  padding: 2px 2px 0 0;
  align-items: flex-start;
  justify-content: flex-end;
}

.flag {
  width: 26px;
  height: 20px;
  display: block;
}

.logoc {
  padding: 2px 0 0;
  align-items: flex-start;
  justify-content: flex-end;
}

.logo {
  width: 73px;
  height: 27px;
  position: relative;
  overflow: hidden;
  background: #fff;
  display: flex;
  align-items: center;
  justify-content: center;
  font-family: "Liberation Sans", Arial, sans-serif;
}

.fill {
  position: absolute;
  inset: 0;
  width: 100%;
  height: 100%;
}

.l-wizzold {
  height: 25px;
  color: #fff;
  font-family: "Liberation Serif", serif;
  font-style: italic;
  font-size: 30px;
  letter-spacing: 2px;
  -webkit-text-stroke: 1px #8a4f94;
}

.l-etihad {
  background: #f2ede2;
  color: #a29068;
  font-size: 22px;
  flex-direction: column;
  line-height: 20px;
  padding-top: 3px;
  box-sizing: border-box;
}

.l-etihad small {
  font-size: 5px;
  line-height: 6px;
  letter-spacing: 3px;
  color: #555;
  -webkit-text-stroke: 0;
}

.l-arabia {
  color: #d8192b;
  font-size: 16px;
  font-weight: bold;
  justify-content: flex-start;
  white-space: nowrap;
  padding: 8px 0 0 26px;
  box-sizing: border-box;
}

.l-vueling {
  background: #ffcb05;
  color: #8a94a4;
  font-size: 24px;
  -webkit-text-stroke: .4px #8a94a4;
  justify-content: flex-start;
  padding: 0 0 5px 1px;
  box-sizing: border-box;
}

.l-volotea {
  height: 25px;
  color: #222;
  font-size: 15px;
  font-weight: bold;
  justify-content: flex-start;
  padding: 4px 0 0 2px;
  box-sizing: border-box;
}

.l-ryan {
  background: #1f2478;
  color: #fff;
  flex-direction: column;
  font-style: italic;
  font-weight: bold;
  font-size: 10.5px;
  white-space: nowrap;
  align-items: flex-start;
  padding-left: 2px;
  box-sizing: border-box;
}

.l-ryan small {
  font-size: 5px;
  padding-left: 2px;
}

.l-jet2 {
  color: #ee1c25;
  font-size: 27px;
  font-style: italic;
  font-weight: bold;
  letter-spacing: -.5px;
}

.l-easy {
  color: #f2640f;
  font-family: "Liberation Serif", serif;
  font-size: 21px;
  font-weight: bold;
}

.l-wizz {
  color: #4a2a92;
  font-size: 28px;
  font-weight: bold;
  font-style: italic;
  letter-spacing: -1px;
}

.wz-bang {
  color: #e0208c;
}

.wz-z {
  color: #a828a0;
}

.l-finnair {
  color: #1a4d9a;
  font-size: 11px;
  font-weight: bold;
  font-style: italic;
  letter-spacing: 1px;
  justify-content: flex-start;
  padding: 9px 0 0 1px;
  box-sizing: border-box;
}

.l-tui {
  height: 25px;
  color: #d81e28;
  font-size: 15px;
  font-weight: bold;
  justify-content: flex-end;
  padding-right: 1px;
  box-sizing: border-box;
}

.l-blue {
  background: #1f3a96;
}

.vscroll {
  flex: none;
  width: 21px;
  position: relative;
  display: flex;
  flex-direction: column;
  align-items: center;
  padding-top: 8px;
  box-sizing: border-box;
  background: #f0f0f0;
}

.vthumb {
  position: absolute;
  top: 186px;
  left: 1px;
  width: 19px;
  height: 22px;
  background: #cdcdcd;
}

.vdown {
  position: absolute;
  bottom: 6px;
}

.hscroll {
  height: 22px;
  width: 621px;
  position: relative;
  display: flex;
  align-items: center;
  padding-left: 8px;
  box-sizing: border-box;
}

.hthumb {
  position: absolute;
  left: 21px;
  top: 0;
  width: 22px;
  height: 20px;
  background: #cdcdcd;
}

.hright {
  position: absolute;
  right: 6px;
}

.statusbar {
  height: 19px;
  flex: none;
  display: flex;
  gap: 3px;
  box-sizing: border-box;
  border-top: 1px solid #a0a0a0;
  box-shadow: inset 0 1px #fff;
  padding-top: 1px;
  font-size: 14.4px;
}

.statusbar span {
  flex: none;
  padding-left: 2px;
  box-sizing: border-box;
  line-height: 17px;
  white-space: nowrap;
  border-top: 1px solid #b0b0b0;
  border-left: 1px solid #b0b0b0;
}

.statusbar .grow {
  flex: 1;
}

.taskline {
  height: 2px;
  flex: none;
  background: #3c3c3c;
}
</style>

<style>
html,
body {
  margin: 0;
  background: #f0f0f0;
  overflow: hidden;
}
</style>
